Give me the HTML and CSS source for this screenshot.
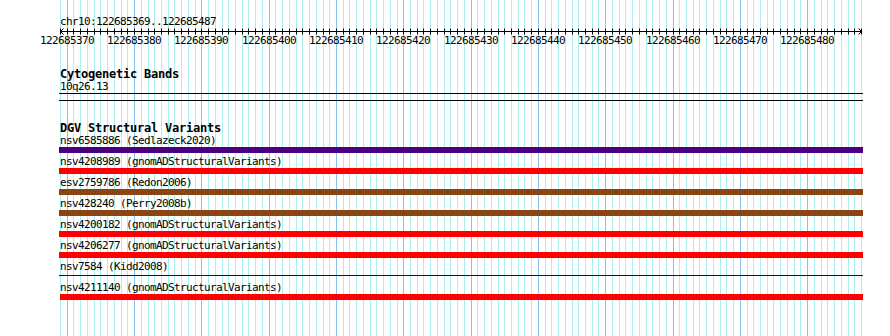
FILE: index.html
```html
<!DOCTYPE html>
<html lang="en">
<head>
    <meta charset="UTF-8">
    <title>chr10:122685369..122685487</title>
    <link rel="stylesheet" href="styles.css">
</head>
<body>

    <div class="view">
        <svg class="grid" id="grid" width="803" height="336"></svg>

        <div class="locus">chr10:122685369..122685487</div>
        <svg class="ruler" id="ruler" width="803" height="22"></svg>

        <!-- Cytogenetic bands -->
        <section class="track cyto">
            <h2>Cytogenetic Bands</h2>
            <div class="label">10q26.13</div>
            <div class="band-line"></div>
            <div class="band-line"></div>
        </section>

        <!-- DGV -->
        <section class="track dgv">
            <h2>DGV Structural Variants</h2>
            <div class="feature">
                <div class="label">nsv6585886 (Sedlazeck2020)</div>
                <div class="bar bar-indigo"></div>
            </div>
            <div class="feature">
                <div class="label">nsv4208989 (gnomADStructuralVariants)</div>
                <div class="bar bar-red"></div>
            </div>
            <div class="feature">
                <div class="label">esv2759786 (Redon2006)</div>
                <div class="bar bar-brown"></div>
            </div>
            <div class="feature">
                <div class="label">nsv428240 (Perry2008b)</div>
                <div class="bar bar-brown"></div>
            </div>
            <div class="feature">
                <div class="label">nsv4200182 (gnomADStructuralVariants)</div>
                <div class="bar bar-red"></div>
            </div>
            <div class="feature">
                <div class="label">nsv4206277 (gnomADStructuralVariants)</div>
                <div class="bar bar-red"></div>
            </div>
            <div class="feature">
                <div class="label">nsv7584 (Kidd2008)</div>
                <div class="bar bar-thin"></div>
            </div>
            <div class="feature">
                <div class="label">nsv4211140 (gnomADStructuralVariants)</div>
                <div class="bar bar-red bar-inset"></div>
            </div>
        </section>
    </div>

    <script>
        const NS = 'http://www.w3.org/2000/svg';
        const START = 122685369;
        const BASES = 119;
        const STEP = 801 / BASES;

        function el(name, attrs) {
            const node = document.createElementNS(NS, name);
            for (const k in attrs) node.setAttribute(k, attrs[k]);
            return node;
        }

        // grid lines, one per base, darker every 10
        const grid = document.getElementById('grid');
        for (let i = 0; i <= BASES; i++) {
            const x = Math.round(i * STEP) + 0.5;
            const major = (START + i) % 10 === 0;
            grid.appendChild(el('line', {
                x1: x, x2: x, y1: 0, y2: 336,
                class: major ? 'major' : 'minor'
            }));
        }

        // ruler with ticks and labels
        const ruler = document.getElementById('ruler');
        const y = 3.5;
        ruler.appendChild(el('line', { x1: 0, x2: 802, y1: y, y2: y, class: 'axis' }));
        ruler.appendChild(el('polyline', { points: '3.5,0.5 0.5,3.5 3.5,6.5', class: 'axis' }));
        ruler.appendChild(el('polyline', { points: '798.5,0.5 801.5,3.5 798.5,6.5', class: 'axis' }));
        for (let i = 0; i <= BASES; i++) {
            const x = Math.round(i * STEP) + 0.5;
            ruler.appendChild(el('line', { x1: x, x2: x, y1: y - 3, y2: y + 3, class: 'axis' }));
            if ((START + i) % 10 === 0) {
                const t = el('text', { x: Math.round(i * STEP), y: 16, class: 'tick-label' });
                t.textContent = START + i;
                ruler.appendChild(t);
            }
        }
    </script>

</body>
</html>
```

FILE: styles.css
```css
body {
    margin: 0;
    padding: 0;
    background-color: #fff;
    color: #000;
    font-family: "DejaVu Sans Mono", "Liberation Mono", monospace;
    font-size: 11px;
    letter-spacing: -0.62px;
}

.view {
    position: relative;
    margin-left: 60px;
    width: 803px;
    height: 336px;
}

.grid {
    position: absolute;
    left: 0;
    top: 0;
}

.grid .minor {
    stroke: #afeeee;
    stroke-width: 1;
}

.grid .major {
    stroke: #87c3ea;
    stroke-width: 1;
}

.locus, .ruler, .track {
    position: relative;
}

.locus {
    padding-top: 15px;
    line-height: 13px;
}

.ruler {
    display: block;
    overflow: visible;
}

.ruler .axis {
    stroke: #000;
    stroke-width: 1;
    fill: none;
}

.tick-label {
    font-family: "DejaVu Sans Mono", "Liberation Mono", monospace;
    font-size: 11px;
    letter-spacing: -0.62px;
    text-anchor: middle;
    fill: #000;
}

.track h2 {
    margin: 0;
    font-size: 12px;
    letter-spacing: -0.22px;
    line-height: 12px;
    font-weight: bold;
}

.label {
    line-height: 13px;
    white-space: nowrap;
}

.cyto {
    margin-top: 18px;
}

.band-line {
    height: 1px;
    margin-left: -1px;
    background-color: #000;
}

.band-line + .band-line {
    margin-top: 6px;
}

.dgv {
    margin-top: 21px;
}

.feature {
    padding-bottom: 2px;
}

.bar {
    height: 6px;
    margin-left: -1px;
}

.bar-indigo {
    background-color: #4b0082;
}

.bar-red {
    background-color: #ff0000;
}

.bar-brown {
    background-color: #8b4513;
}

.bar-thin {
    height: 1px;
    margin: 2px 0 3px -1px;
    background-color: #0000cd;
}

.bar-inset {
    margin-left: 0;
}
```
